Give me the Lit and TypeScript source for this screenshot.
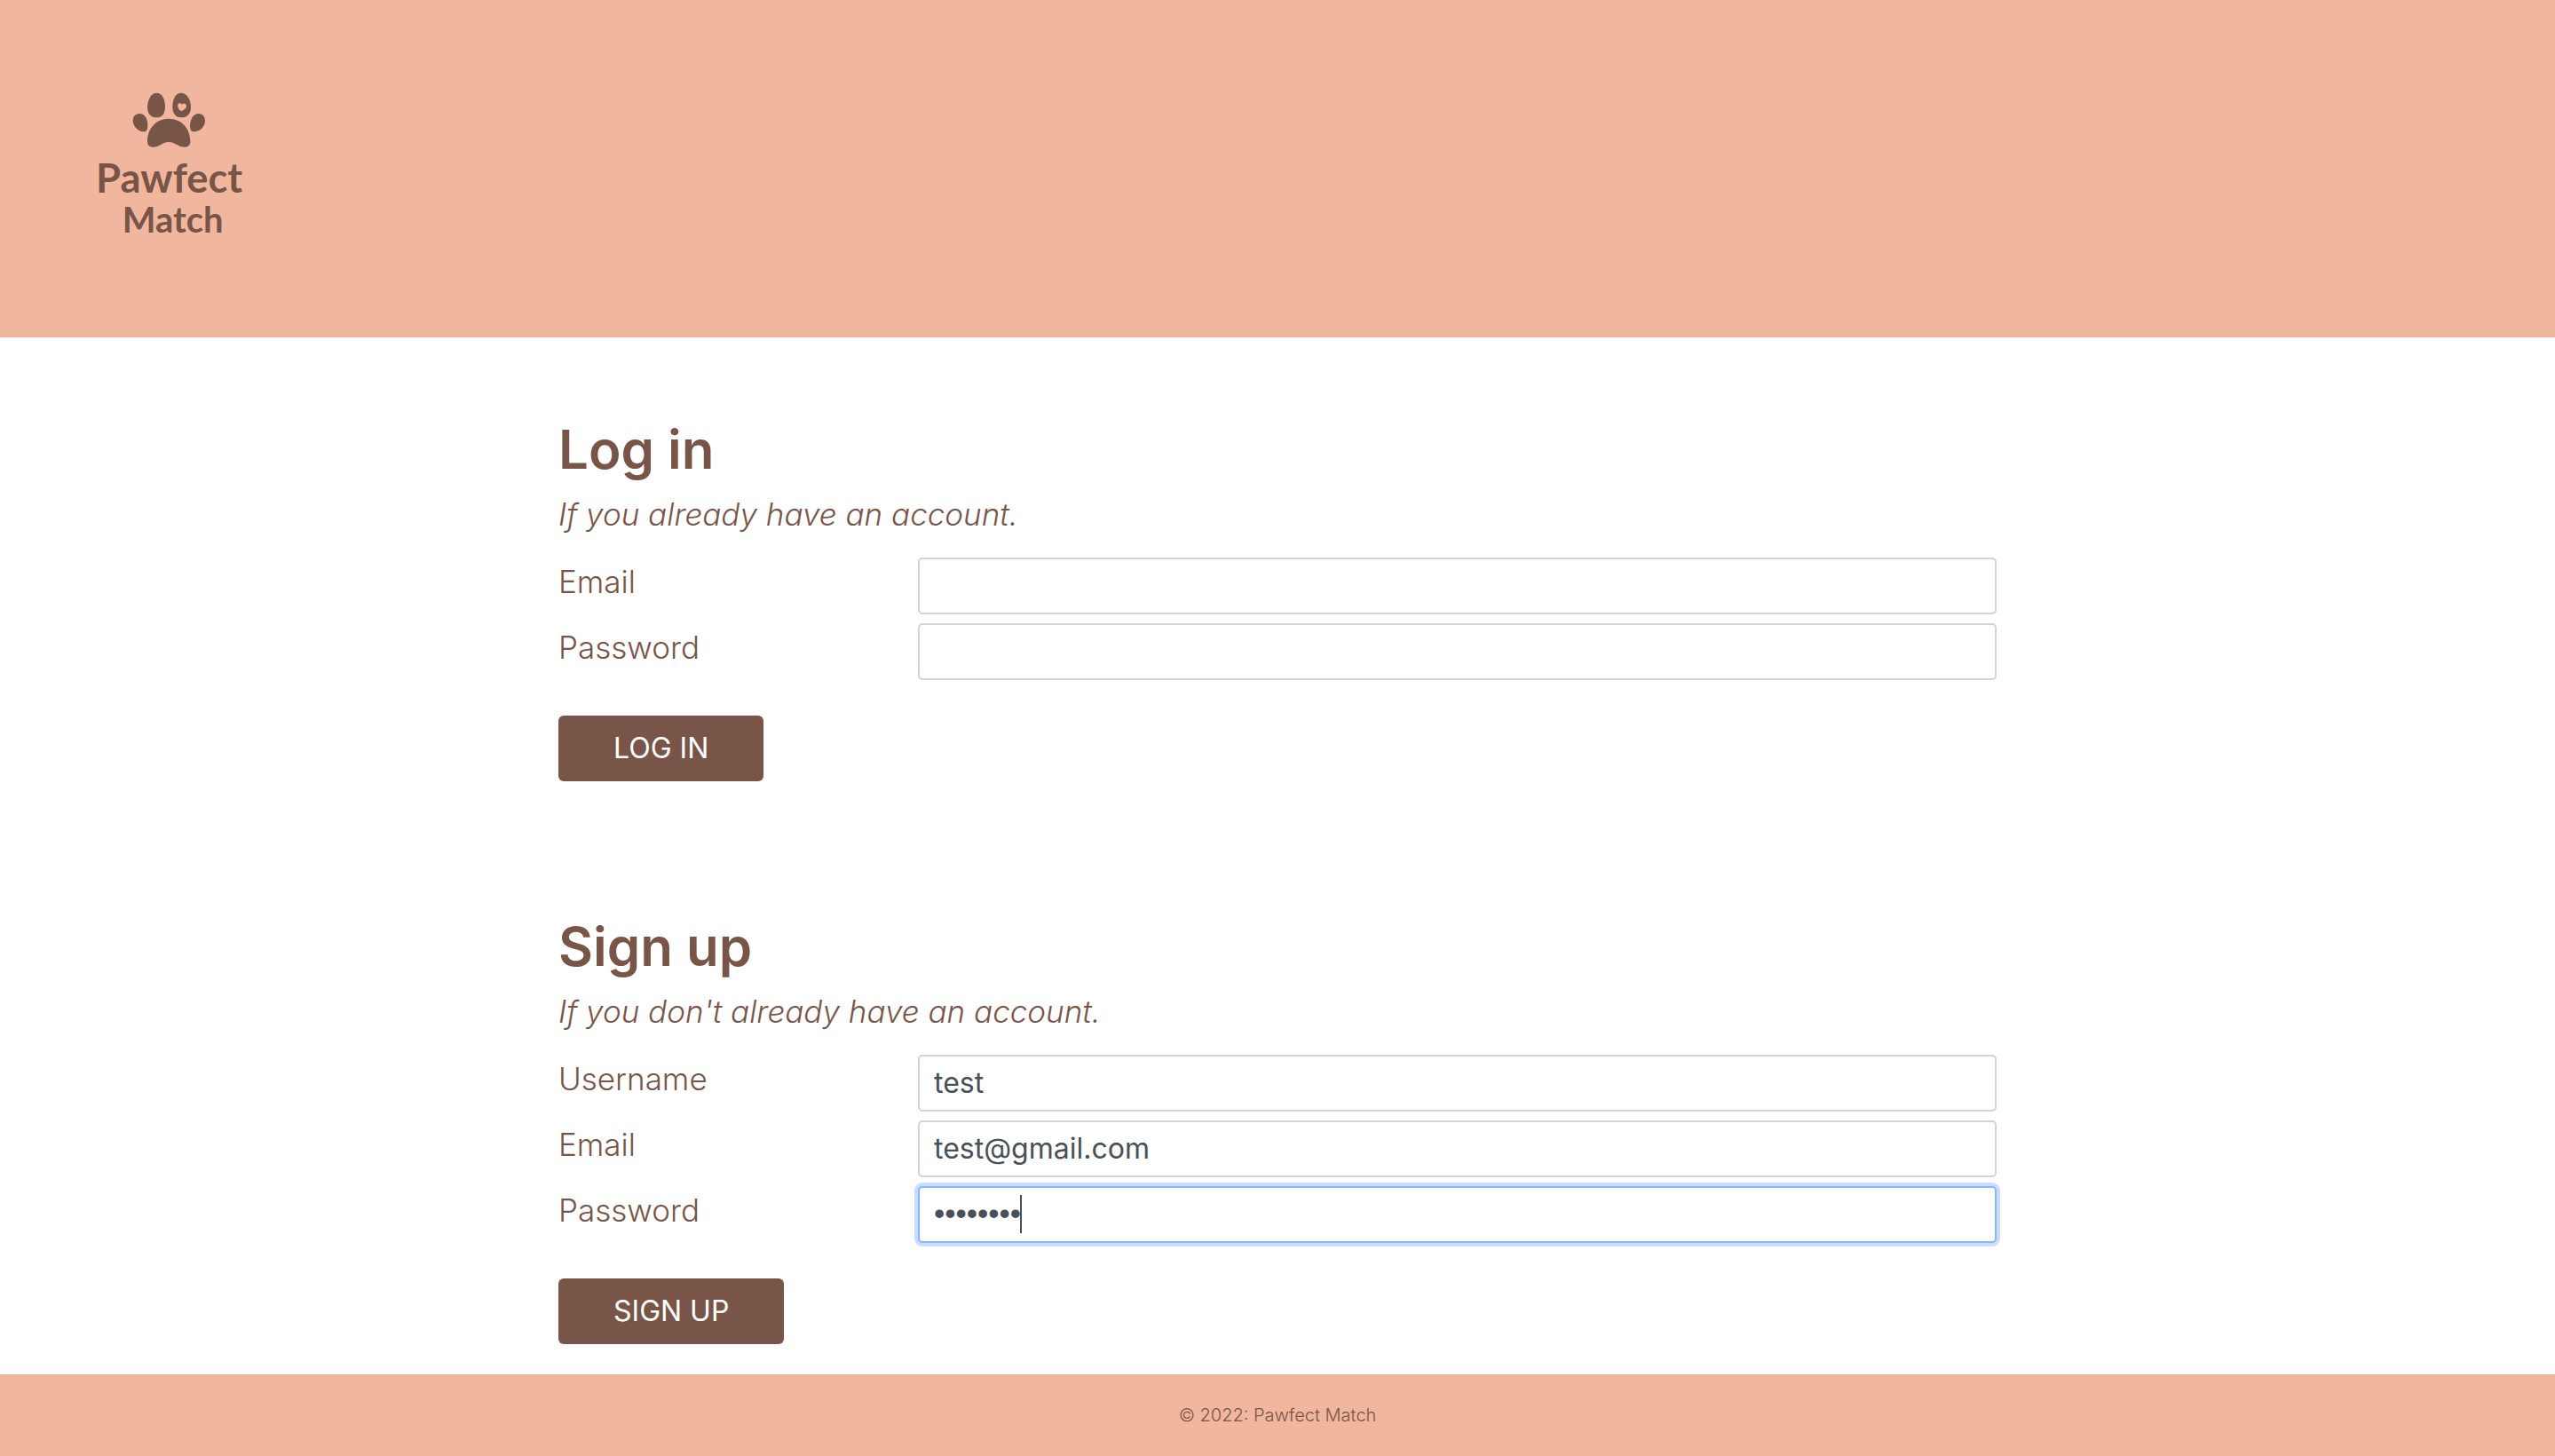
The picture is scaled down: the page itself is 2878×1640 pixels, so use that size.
import { LitElement, html, css } from "lit";
import { customElement, property } from "lit/decorators.js";

interface Field {
  id: string;
  label: string;
  type: "text" | "email" | "password";
  value?: string;
  active?: boolean;
}

@customElement("brand-logo")
class BrandLogo extends LitElement {
  static styles = css`
    :host {
      display: block;
    }
    .logo {
      display: block;
      width: 200px;
      height: 200px;
      fill: #795548;
    }
    .word {
      font-family: Lato, "Liberation Sans", sans-serif;
      font-weight: 700;
      text-anchor: middle;
    }
    .heart {
      fill: #f1b69e;
    }
  `;

  render() {
    return html`
      <svg class="logo" viewBox="0 0 600 600" role="img" aria-label="Pawfect Match">
        <path d="M259 44C277 44 288 64 288 90C288 114 278 127 260 127C240 127 228 114 228 92C229 66 241 44 259 44Z" />
        <path d="M342 44C361 44 375 66 375 92C375 114 362 127 342 127C323 127 313 113 313 90C313 64 324 44 342 44Z" />
        <path d="M201 114C218 113 229 130 229 153C229 168 226 175 216 175C198 175 179 157 179 137C179 123 188 115 201 114Z" />
        <path d="M401 114C414 114 423 124 423 138C423 158 405 175 386 175C376 175 372 168 372 155C373 131 384 114 401 114Z" />
        <path d="M300 131C344 131 373 165 373 208C373 221 365 228 352 227C332 226 321 210 300 210C279 210 270 226 250 227C236 228 228 221 228 208C228 165 257 131 300 131Z" />
        <path class="heart" d="M341 106C333 98 329 91 331 84C333 77 341 77 344 83C349 77 358 79 360 87C361 96 352 102 341 106Z" />
        <text class="word" x="302" y="380" font-size="136">Pawfect</text>
        <text class="word" x="314" y="515" font-size="120">Match</text>
      </svg>
    `;
  }
}

@customElement("account-form")
class AccountForm extends LitElement {
  @property() heading = "";
  @property() hint = "";
  @property() action = "";
  @property({ attribute: false }) fields: Field[] = [];

  static styles = css`
    :host {
      display: block;
    }
    .heading {
      margin: 0 0 12px;
      font-size: 60px;
      line-height: 72px;
      font-weight: 600;
    }
    .hint {
      margin: 0 0 24px;
      font-size: 35px;
      line-height: 50px;
      font-style: italic;
    }
    .rows {
      display: grid;
      gap: 10px;
      margin-bottom: 40px;
    }
    .row {
      display: grid;
      grid-template-columns: 1fr 3fr;
    }
    .label {
      font-size: 35px;
      line-height: 54px;
    }
    .control {
      position: relative;
    }
    .input {
      display: block;
      box-sizing: border-box;
      width: 100%;
      height: 64px;
      padding: 0 16px 2px;
      border: 2px solid #ced4da;
      border-radius: 5px;
      outline: none;
      background: #fff;
      color: #495057;
      font: inherit;
      font-size: 32px;
      font-weight: 400;
    }
    .input[type="password"] {
      font-family: "Liberation Sans", sans-serif;
      font-size: 35px;
    }
    .active {
      border-color: #86b7fe;
      box-shadow: 0 0 0 4px #cbdcff;
      caret-color: transparent;
    }
    .caret {
      position: absolute;
      top: 10px;
      left: 115px;
      width: 2px;
      height: 43px;
      background: #495057;
    }
    .button {
      display: block;
      height: 74px;
      padding: 0 62px 2px;
      border: 0;
      border-radius: 6px;
      background: #795548;
      color: #fff;
      font: inherit;
      font-size: 32px;
      font-weight: 400;
      text-transform: uppercase;
    }
  `;

  render() {
    return html`
      <form @submit=${(e: Event) => e.preventDefault()}>
        <h1 class="heading">${this.heading}</h1>
        <p class="hint">${this.hint}</p>
        <div class="rows">
          ${this.fields.map(
            (f) => html`
              <div class="row">
                <label class="label" for=${f.id}>${f.label}</label>
                <div class="control">
                  <input
                    class=${f.active ? "input active" : "input"}
                    id=${f.id}
                    name=${f.id}
                    type=${f.type}
                    .value=${f.value ?? ""}
                  />
                  ${f.active ? html`<span class="caret"></span>` : ""}
                </div>
              </div>
            `
          )}
        </div>
        <button class="button" type="submit">${this.action}</button>
      </form>
    `;
  }
}

@customElement("app-root")
class AppRoot extends LitElement {
  static styles = css`
    :host {
      display: flex;
      flex-direction: column;
      min-height: 100vh;
      background: #fff;
      color: #795548;
      font-family: Inter, "Liberation Sans", sans-serif;
      font-weight: 300;
    }
    .header {
      padding: 90px;
      background: #f1b69e;
    }
    .home {
      display: inline-block;
      vertical-align: top;
      color: inherit;
    }
    .main {
      flex: 1;
      display: flex;
      flex-direction: column;
      gap: 150px;
      box-sizing: border-box;
      width: 100%;
      max-width: 1620px;
      margin: 0 auto;
      padding: 90px 0 34px;
    }
    .footer {
      padding: 32px;
      background: #f1b69e;
      font-size: 20px;
      line-height: 28px;
      text-align: center;
    }
  `;

  private loginFields: Field[] = [
    { id: "login-email", label: "Email", type: "email" },
    { id: "login-password", label: "Password", type: "password" },
  ];

  private signupFields: Field[] = [
    { id: "username", label: "Username", type: "text", value: "test" },
    { id: "email", label: "Email", type: "email", value: "test@gmail.com" },
    { id: "password", label: "Password", type: "password", value: "testtest", active: true },
  ];

  render() {
    return html`
      <header class="header">
        <a class="home" href="#"><brand-logo></brand-logo></a>
      </header>
      <main class="main">
        <account-form
          heading="Log in"
          hint="If you already have an account."
          action="Log in"
          .fields=${this.loginFields}
        ></account-form>
        <account-form
          heading="Sign up"
          hint="If you don't already have an account."
          action="Sign up"
          .fields=${this.signupFields}
        ></account-form>
      </main>
      <footer class="footer">© 2022: Pawfect Match</footer>
    `;
  }
}
